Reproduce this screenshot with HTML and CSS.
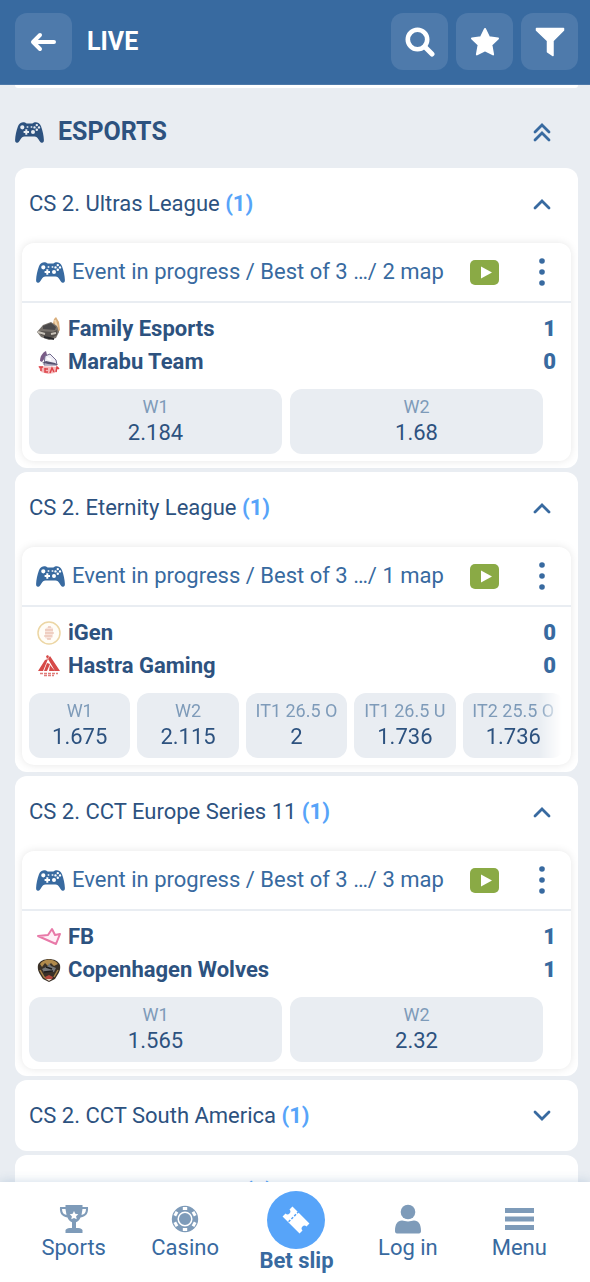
FILE: index.html
```html
<!DOCTYPE html>
<html lang="en">
<head>
<meta charset="utf-8">
<meta name="viewport" content="width=device-width, initial-scale=1">
<title>Live</title>
<link rel="stylesheet" href="styles.css">
</head>
<body>
<svg class="sprite" aria-hidden="true">
  <symbol id="pad" viewBox="0 0 29 21">
    <path fill="currentColor" fill-rule="evenodd" d="M5.6.9C7 .1 8.700 0 10 .6c.7.4 1 .9 1.700.9h5.600c.7 0 1-.5 1.700-.9 1.300-.6 3-.5 4.400.3 1.400.7 2.100 2 2.700 3.600 1.500 4 2.700 9.200 2.800 13.500.1 2-.9 3-2.200 2.700-1.200-.2-2-1.600-3.100-3.300-1.200-1.700-2.200-3-4.100-3h-10c-1.900 0-2.900 1.300-4.100 3-1.100 1.700-1.900 3.100-3.100 3.300C1 21 0 20 .1 18 .2 13.700 1.400 8.500 2.900 4.500 3.500 2.900 4.200 1.600 5.600.9zM7.300 3.200a2.100 2.100 0 1 0 0 4.200 2.100 2.100 0 0 0 0-4.200zM10.300 7.300v1.700H8.600v2h1.700v1.700h2V11H14V9h-1.700V7.300zM18 7.900a2 2 0 1 0 0 4 2 2 0 0 0 0-4zM21.800 1.900a1.200 1.200 0 1 0 0 2.400 1.200 1.200 0 0 0 0-2.400zM19.500 4.200a1.200 1.200 0 1 0 0 2.400 1.200 1.200 0 0 0 0-2.400zM24 4.200a1.200 1.200 0 1 0 0 2.400 1.200 1.200 0 0 0 0-2.400zM21.800 6.500a1.200 1.200 0 1 0 0 2.400 1.200 1.200 0 0 0 0-2.400zM11.700 4.300v1.400h1.600V4.300zM15.700 4.300v1.400h1.600V4.300z"/>
  </symbol>
  <symbol id="chevron" viewBox="0 0 18 12"><path d="M2 10l7-7 7 7" fill="none" stroke="currentColor" stroke-width="2.800" stroke-linecap="round"/></symbol>
  <symbol id="play" viewBox="0 0 29 25"><rect width="29" height="25" rx="5" fill="#8aaa45"/><path d="M11 6.500v12l11-6z" fill="#fff"/></symbol>
  <symbol id="dots" viewBox="0 0 6 28"><g fill="currentColor"><circle cx="3" cy="3" r="2.800"/><circle cx="3" cy="14" r="2.800"/><circle cx="3" cy="25" r="2.800"/></g></symbol>
</svg>

<header class="topbar">
  <button class="tile" type="button" aria-label="Back">
    <svg width="27" height="20" viewBox="0 0 27 20"><path d="M24 10H4M10 3l-7 7 7 7" fill="none" stroke="#fff" stroke-width="4" stroke-linecap="round" stroke-linejoin="round"/></svg>
  </button>
  <h1 class="topbar-title">LIVE</h1>
  <div class="topbar-tools">
    <button class="tile" type="button" aria-label="Search">
      <svg width="30" height="30" viewBox="0 0 30 30"><g fill="none" stroke="#fff"><circle cx="12.500" cy="12.500" r="9.700" stroke-width="4.600"/><path d="M20 20l7 7" stroke-width="5" stroke-linecap="round"/></g></svg>
    </button>
    <button class="tile" type="button" aria-label="Favourites">
      <svg width="30" height="30" viewBox="0 0 30 30"><path d="M15 2l4 8.300 9 1.200-6.600 6.300 1.700 9.600-8.100-4-8.100 4 1.700-9.600L2 11.500l9-1.200z" fill="#fff" stroke="#fff" stroke-width="2" stroke-linejoin="round"/></svg>
    </button>
    <button class="tile" type="button" aria-label="Filter">
      <svg width="30" height="30" viewBox="0 0 30 30"><path d="M1.500 1.500h27v1.800L18 13.800v14.700l-5.500-3.600V13.800L1.500 3.300z" fill="#fff" stroke="#fff" stroke-width="1.500" stroke-linejoin="round"/></svg>
    </button>
  </div>
</header>

<main class="feed">
  <div class="feed-tail"></div>
  <div class="sport">
    <svg class="pad"><use href="#pad"/></svg>
    <h2 class="sport-title">ESPORTS</h2>
    <button class="toggle" type="button" aria-label="Collapse all">
      <svg width="18" height="19" viewBox="0 0 18 19"><path d="M2 9l7-7 7 7M2 17l7-7 7 7" fill="none" stroke="currentColor" stroke-width="2.800" stroke-linecap="round"/></svg>
    </button>
  </div>

  <section class="league">
    <div class="league-head">
      <h3 class="league-name">CS 2. Ultras League <b class="count">(1)</b></h3>
      <button class="toggle" type="button" aria-label="Collapse"><svg class="chevron"><use href="#chevron"/></svg></button>
    </div>
    <article class="event">
      <div class="event-head">
        <svg class="pad"><use href="#pad"/></svg>
        <p class="event-status"><span class="event-stage">Event in progress / Best of 3 …</span><span>/ 2 map</span></p>
        <button class="plain" type="button" aria-label="Watch"><svg class="play"><use href="#play"/></svg></button>
        <button class="plain more" type="button" aria-label="More"><svg class="dots"><use href="#dots"/></svg></button>
      </div>
      <div class="teams">
        <div class="team">
          <svg class="crest" viewBox="0 0 24 24"><path d="M17 2l2-2 3 5 1 8-3 4-5-6z" fill="#d9ae7c"/><path d="M18 3l2 7" stroke="#f0d6b0" stroke-width="2"/><path d="M0 15l6-7 8-3 6 4 2 6-3 6-7 2-8-3z" fill="#77716b"/><path d="M6 9l8-3 5 4-1 3-12-1z" fill="#4b494a"/><path d="M3 14l13 1 4-2v5l-6 3-10-3z" fill="#55504c"/><path d="M1 15l7 2M14 17l5-1" stroke="#c8c2b8" stroke-width="2"/><path d="M7 20l10 2" stroke="#29292c" stroke-width="2"/></svg>
          <span class="team-name">Family Esports</span><b class="score">1</b>
        </div>
        <div class="team">
          <svg class="crest" viewBox="0 0 24 24"><path d="M3 11c0-4 2-8 6-10l1 4-5 7z" fill="#795b86"/><path d="M8 6l5-2 6 6 1 5H7z" fill="#efedf5" stroke="#716a8e"/><path d="M5 13l4-2 9 2 3 2-10-1z" fill="#55516f"/><path d="M10 8l4 2" stroke="#fff" stroke-width="2"/><path d="M1 16l21 1-4 6-7 1-7-2z" fill="#f6b9bb"/><path d="M2 17h4M4 17v4M8 18v4h3M8 19h3M13 23l2-5 2 4M19 22l1-5 2 2" fill="none" stroke="#dc4248" stroke-width="1.500"/></svg>
          <span class="team-name">Marabu Team</span><b class="score">0</b>
        </div>
      </div>
      <div class="odds odds-pair">
        <button class="odd" type="button"><span class="odd-label">W1</span><span class="odd-value">2.184</span></button>
        <button class="odd" type="button"><span class="odd-label">W2</span><span class="odd-value">1.68</span></button>
      </div>
    </article>
  </section>

  <section class="league">
    <div class="league-head">
      <h3 class="league-name">CS 2. Eternity League <b class="count">(1)</b></h3>
      <button class="toggle" type="button" aria-label="Collapse"><svg class="chevron"><use href="#chevron"/></svg></button>
    </div>
    <article class="event">
      <div class="event-head">
        <svg class="pad"><use href="#pad"/></svg>
        <p class="event-status"><span class="event-stage">Event in progress / Best of 3 …</span><span>/ 1 map</span></p>
        <button class="plain" type="button" aria-label="Watch"><svg class="play"><use href="#play"/></svg></button>
        <button class="plain more" type="button" aria-label="More"><svg class="dots"><use href="#dots"/></svg></button>
      </div>
      <div class="teams">
        <div class="team">
          <svg class="crest" viewBox="0 0 24 24"><circle cx="12" cy="12" r="11" fill="#fffdf7" stroke="#ecd6a4" stroke-width="1.500"/><path d="M12 5l4 2v9l-4 3-4-2V8z" fill="#f8e4dc"/><path d="M8 9h8M8 12h9M7 15h8M10 18h4M11 6h3" stroke="#e6b9a5"/></svg>
          <span class="team-name">iGen</span><b class="score">0</b>
        </div>
        <div class="team">
          <svg class="crest" viewBox="0 0 24 24"><path d="M9 2l2-1 1 2-2 2zM8 6l3-1-5 12H1zM13 2l10 15h-5L11 5zM10 9l3 1-3 7H7zM13 11l5 6h-6z" fill="#d64a48"/><path d="M3 19.500h18M7 21.500h10" stroke="#e07c7a" stroke-width="1.500" stroke-dasharray="3 1"/></svg>
          <span class="team-name">Hastra Gaming</span><b class="score">0</b>
        </div>
      </div>
      <div class="odds odds-strip">
        <button class="odd" type="button"><span class="odd-label">W1</span><span class="odd-value">1.675</span></button>
        <button class="odd" type="button"><span class="odd-label">W2</span><span class="odd-value">2.115</span></button>
        <button class="odd" type="button"><span class="odd-label">IT1 26.5 O</span><span class="odd-value">2</span></button>
        <button class="odd" type="button"><span class="odd-label">IT1 26.5 U</span><span class="odd-value">1.736</span></button>
        <button class="odd" type="button"><span class="odd-label">IT2 25.5 O</span><span class="odd-value">1.736</span></button>
      </div>
    </article>
  </section>

  <section class="league">
    <div class="league-head">
      <h3 class="league-name">CS 2. CCT Europe Series 11 <b class="count">(1)</b></h3>
      <button class="toggle" type="button" aria-label="Collapse"><svg class="chevron"><use href="#chevron"/></svg></button>
    </div>
    <article class="event">
      <div class="event-head">
        <svg class="pad"><use href="#pad"/></svg>
        <p class="event-status"><span class="event-stage">Event in progress / Best of 3 …</span><span>/ 3 map</span></p>
        <button class="plain" type="button" aria-label="Watch"><svg class="play"><use href="#play"/></svg></button>
        <button class="plain more" type="button" aria-label="More"><svg class="dots"><use href="#dots"/></svg></button>
      </div>
      <div class="teams">
        <div class="team">
          <svg class="crest" viewBox="0 0 24 24"><path d="M1 11l10-1 4-6 3 6 5-1-4 10z" fill="#fff0f7" stroke="#e879a8" stroke-width="2" stroke-linejoin="round"/></svg>
          <span class="team-name">FB</span><b class="score">1</b>
        </div>
        <div class="team">
          <svg class="crest" viewBox="0 0 24 24"><path d="M1 7c3-8 19-8 22 0 1 6-2 9-5 14l-6 3-6-3C3 16 0 13 1 7z" fill="#3a3128"/><path d="M3 6c4-6 14-6 18 0l-4 2-3-3-3 3-3-3-3 4z" fill="#b18a4c"/><path d="M5 11l6-3 1-3 2 3 5 2-2 4H7z" fill="#75777a"/><path d="M9 9l6 2M7 14l9-1" stroke="#1d1c1d" stroke-width="1.500"/><path d="M3 12l4 7 3 2M21 12l-4 7" fill="none" stroke="#a98447" stroke-width="1.500"/><path d="M8 19l4-2 4 2-1 2H9z" fill="#b4483e"/><path d="M9 21h6l-3 2z" fill="#efd9c6"/></svg>
          <span class="team-name">Copenhagen Wolves</span><b class="score">1</b>
        </div>
      </div>
      <div class="odds odds-pair">
        <button class="odd" type="button"><span class="odd-label">W1</span><span class="odd-value">1.565</span></button>
        <button class="odd" type="button"><span class="odd-label">W2</span><span class="odd-value">2.32</span></button>
      </div>
    </article>
  </section>

  <section class="league league-closed">
    <div class="league-head">
      <h3 class="league-name">CS 2. CCT South America <b class="count">(1)</b></h3>
      <button class="toggle" type="button" aria-label="Expand"><svg class="chevron chevron-down"><use href="#chevron"/></svg></button>
    </div>
  </section>
  <section class="league league-closed">
    <div class="league-head">
      <h3 class="league-name">CS 2. Oceanic Games <b class="count">(1)</b></h3>
      <button class="toggle" type="button" aria-label="Expand"><svg class="chevron chevron-down"><use href="#chevron"/></svg></button>
    </div>
  </section>
</main>

<nav class="tabs">
  <a class="tab" href="#">
    <span class="tab-icon"><svg width="30" height="30" viewBox="0 0 30 30"><path d="M6.500 1h17v2H29c.5 6-1.500 9.500-7.500 10.500-1 2.500-2.500 4-4.500 4.800V24c3 0 5.500.3 6.500 2v3h-17v-3C7.500 24.300 10 24 13 24v-5.700c-2-.8-3.500-2.300-4.500-4.800C2.500 12.500.5 9 1 3h5.500zM3 5c0 3.500 1.500 5.500 4.500 6L6.500 5zM27 5h-3.500l-1 6c3-.5 4.500-2.500 4.500-6z" fill="#7e9bb9" fill-rule="evenodd"/><path d="M15 7l1.300 2.800 3 .4-2.200 2.100.6 3-2.700-1.400-2.700 1.400.6-3-2.200-2.100 3-.4z" fill="#fff"/></svg></span>
    <span class="tab-label">Sports</span>
  </a>
  <a class="tab" href="#">
    <span class="tab-icon"><svg width="28" height="28" viewBox="0 0 28 28"><circle cx="14" cy="14" r="13.200" fill="#7e9bb9"/><circle cx="14" cy="14" r="6.800" fill="none" stroke="#fff" stroke-width="1.500"/><g fill="#fff"><path id="mark" d="M11.800 2h4.400v3h-4.400z"/><use href="#mark" transform="rotate(60 14 14)"/><use href="#mark" transform="rotate(120 14 14)"/><use href="#mark" transform="rotate(180 14 14)"/><use href="#mark" transform="rotate(240 14 14)"/><use href="#mark" transform="rotate(300 14 14)"/></g></svg></span>
    <span class="tab-label">Casino</span>
  </a>
  <a class="tab tab-main" href="#">
    <span class="tab-disc"><svg width="30" height="30" viewBox="0 0 30 30"><g transform="rotate(45 15 15)"><path d="M3 8h24v4.200a2.800 2.800 0 0 0 0 5.600V22H3v-4.200a2.800 2.800 0 0 0 0-5.600z" fill="#fff"/><path d="M11 7v16" stroke="#57a4f9" stroke-width="1.500" stroke-dasharray="2.500 1.500"/></g></svg></span>
    <span class="tab-label">Bet slip</span>
  </a>
  <a class="tab" href="#">
    <span class="tab-icon"><svg width="28" height="30" viewBox="0 0 28 30"><circle cx="14" cy="8" r="7.300" fill="#7e9bb9"/><path d="M1 27c0-7 2.500-10.500 7-10.500 2 0 3.500 1 6 1s4-1 6-1c4.500 0 7 3.500 7 10.500 0 1.500-.7 2.500-2 2.500H3c-1.300 0-2-1-2-2.500z" fill="#7e9bb9"/></svg></span>
    <span class="tab-label">Log in</span>
  </a>
  <a class="tab" href="#">
    <span class="tab-icon"><svg width="29" height="22" viewBox="0 0 29 22"><path d="M0 0h29v5H0zM0 8.500h29v5H0zM0 17h29v5H0z" fill="#7e9bb9"/></svg></span>
    <span class="tab-label">Menu</span>
  </a>
</nav>
</body>
</html>
```
FILE: styles.css
```css
* { box-sizing: border-box; }

body {
  margin: 0;
  height: 100vh;
  display: flex;
  flex-direction: column;
  background: #e9edf2;
  color: #2d527f;
  font: 22px/26px Roboto, "Liberation Sans", sans-serif;
}

h1, h2, h3, p { margin: 0; }

button {
  margin: 0;
  padding: 0;
  border: 0;
  background: none;
  color: inherit;
  font: inherit;
  cursor: pointer;
}

svg { display: block; flex: none; }

.sprite { position: absolute; width: 0; height: 0; }

.topbar {
  flex: none;
  display: flex;
  align-items: center;
  gap: 15px;
  padding: 13px 12px 14px 15px;
  background: #386aa0;
  border-bottom: 1px solid #4d79a9;
}
.topbar-title { flex: 1; color: #fff; font-size: 25px; font-weight: 700; }
.topbar-tools { display: flex; gap: 8px; }
.tile {
  display: grid;
  place-items: center;
  width: 57px;
  height: 57px;
  border-radius: 12px;
  background: #4e7aab;
}

.feed {
  flex: 1;
  min-height: 0;
  overflow-y: auto;
  scrollbar-width: none;
  display: flex;
  flex-direction: column;
  gap: 4px;
  padding: 0 12px 0 15px;
}
.feed > * { flex: none; }
.feed-tail { height: 3px; border-radius: 0 0 12px 12px; background: #fff; }

.sport {
  display: flex;
  align-items: center;
  gap: 14px;
  height: 72px;
  padding: 8px 27px 0 0;
}
.sport-title { flex: 1; font-size: 25px; font-weight: 700; }

.toggle { color: #386aa0; }
.pad { width: 29px; height: 21px; }
.chevron { width: 18px; height: 12px; }
.chevron-down { transform: rotate(180deg); }

.league {
  padding: 0 7px 7px;
  border-radius: 12px;
  background: #fff;
}
.league-head {
  display: flex;
  align-items: center;
  height: 72px;
  margin-bottom: 3px;
  padding: 0 20px 0 7px;
}
.league-name { flex: 1; font-size: 22px; font-weight: 400; }
.count { color: #57a4f9; font-weight: 700; }
.league-closed { padding-bottom: 0; }
.league-closed .league-head { height: 71px; margin: 0; }

.event {
  border-radius: 12px;
  background: #fff;
  box-shadow: 0 0 8px rgba(0, 0, 0, 0.1);
}
.event-head {
  display: flex;
  align-items: center;
  gap: 7px;
  height: 60px;
  padding: 0 26px 0 14px;
  border-bottom: 2px solid #e9edf2;
  color: #386aa0;
}
.event-status {
  flex: 1;
  min-width: 0;
  display: flex;
  white-space: nowrap;
}
.event-stage { overflow: hidden; text-overflow: ellipsis; }
.play { width: 29px; height: 25px; }
.dots { width: 6px; height: 28px; }
.more { margin-left: 33px; }

.teams { padding: 9px 15px 11px; }
.team { display: flex; align-items: center; gap: 7px; height: 33px; font-weight: 700; }
.team-name { flex: 1; }
.crest { width: 24px; height: 24px; }
.score { color: #386aa0; }

.odds { display: grid; padding: 0 7px 7px; overflow: hidden; }
.odds-pair { grid-template-columns: 1fr 1fr; gap: 8px; padding-right: 28px; }
.odds-strip {
  grid-template-columns: repeat(5, minmax(101px, 1fr));
  gap: 7px;
  mask-image: linear-gradient(to left, transparent 9px, #000 32px);
}
.odd {
  display: flex;
  flex-direction: column;
  align-items: center;
  justify-content: center;
  height: 65px;
  padding-bottom: 3px;
  border-radius: 12px;
  background: #e9edf2;
  white-space: nowrap;
}
.odd-label { color: #7e9bb9; font-size: 18px; }
.odd-value { font-size: 22px; }

.tabs {
  flex: none;
  position: relative;
  display: grid;
  grid-template-columns: repeat(5, 1fr);
  height: 100px;
  padding: 0 15px 0 18px;
  background: #fff;
  box-shadow: 0 0 10px rgba(56, 106, 160, 0.25);
}
.tab {
  display: flex;
  flex-direction: column;
  align-items: center;
  padding-top: 20px;
  color: #386aa0;
  line-height: 24px;
  text-decoration: none;
}
.tab-icon { display: grid; place-items: center; height: 34px; }
.tab-main { padding-top: 9px; font-weight: 700; }
.tab-disc {
  display: grid;
  place-items: center;
  width: 58px;
  height: 58px;
  border-radius: 50%;
  background: #57a4f9;
}
```
